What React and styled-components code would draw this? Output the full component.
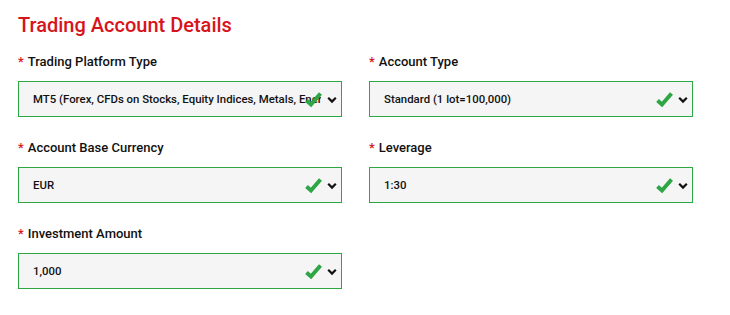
import React from 'react';
import styled, { createGlobalStyle } from 'styled-components';

const GlobalStyle = createGlobalStyle`
  body {
    margin: 0;
    background: #fff;
    font-family: Roboto, "Liberation Sans", Arial, sans-serif;
  }
`;

const Page = styled.div`
  padding: 12px 18px 20px 18px;
  width: 675px;
`;

const Title = styled.h2`
  margin: 0 0 15px 0;
  color: #d7141b;
  font-size: 20px;
  font-weight: 500;
  line-height: 26px;
`;

const Grid = styled.div`
  display: grid;
  grid-template-columns: 324px 324px;
  column-gap: 27px;
  row-gap: 22px;
`;

const Field = styled.div`
  display: flex;
  flex-direction: column;
`;

const Label = styled.label`
  font-size: 13px;
  font-weight: 500;
  color: #111;
  line-height: 18px;
  margin-bottom: 10px;
`;

const Star = styled.span`
  color: #d7141b;
  margin-right: 4px;
`;

const SelectBox = styled.div`
  box-sizing: border-box;
  height: 36px;
  border: 1px solid #2ea645;
  background: #f5f5f5;
  display: flex;
  align-items: center;
  padding: 0 20px 0 14px;
  position: relative;
`;

const Value = styled.span`
  flex: 1;
  font-size: 11.4px;
  font-weight: 500;
  color: #111;
  white-space: nowrap;
  overflow: hidden;
`;

const Icons = styled.span`
  position: absolute;
  right: 4px;
  top: 9px;
  display: flex;
  align-items: center;
  gap: 4px;
`;

const Check = () => (
  <svg width="19" height="17" viewBox="0 0 19 17">
    <path d="M2.5 9.5 L7 13.5 L16.5 2.5" fill="none" stroke="#2ea645" strokeWidth="4" strokeLinecap="butt" />
  </svg>
);

const Chevron = () => (
  <svg width="10" height="8" viewBox="0 0 10 8">
    <path d="M1.2 1.8 L5 5.6 L8.8 1.8" fill="none" stroke="#111" strokeWidth="2.2" />
  </svg>
);

const fields = [
  { label: 'Trading Platform Type', value: 'MT5 (Forex, CFDs on Stocks, Equity Indices, Metals, Energies)' },
  { label: 'Account Type', value: 'Standard (1 lot=100,000)' },
  { label: 'Account Base Currency', value: 'EUR' },
  { label: 'Leverage', value: '1:30' },
  { label: 'Investment Amount', value: '1,000' },
];

export default function App() {
  return (
    <>
      <GlobalStyle />
      <Page>
        <Title>Trading Account Details</Title>
        <Grid>
          {fields.map((f) => (
            <Field key={f.label}>
              <Label><Star>*</Star>{f.label}</Label>
              <SelectBox>
                <Value>{f.value}</Value>
                <Icons>
                  <Check />
                  <Chevron />
                </Icons>
              </SelectBox>
            </Field>
          ))}
        </Grid>
      </Page>
    </>
  );
}
